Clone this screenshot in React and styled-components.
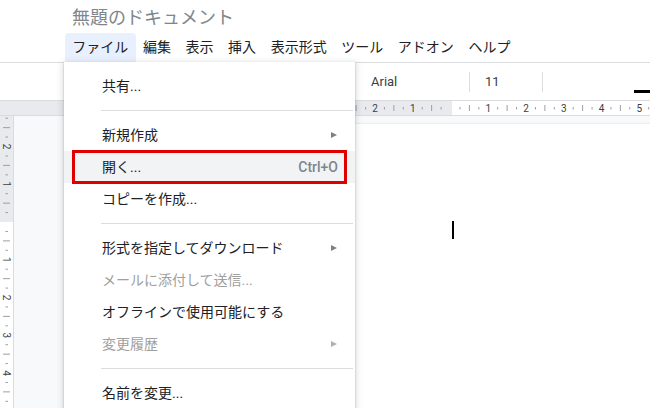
import React from 'react';
import styled, { createGlobalStyle } from 'styled-components';

const GlobalStyle = createGlobalStyle`
  html, body { margin: 0; padding: 0; background: #fff; }
  body {
    font-family: Roboto, "Noto Sans CJK JP", sans-serif;
    overflow: hidden;
  }
`;

const Screen = styled.div`
  position: relative;
  width: 650px;
  height: 408px;
  overflow: hidden;
  display: flex;
  flex-direction: column;
  color: #202124;
  font-family: Roboto, "Noto Sans CJK JP", sans-serif;
`;

const TitleRow = styled.div`
  height: 33px;
  box-sizing: border-box;
  padding: 2px 0 0 72px;
  display: flex;
  align-items: center;
  font-size: 18px;
  line-height: 1;
  color: #80868b;
`;

const MenuBar = styled.div`
  height: 29px;
  display: flex;
  padding-left: 65px;
  border-bottom: 1px solid #dadce0;
`;

const MenuBarItem = styled.div`
  padding: 0 7.3px;
  line-height: 29px;
  font-size: 14px;
  color: #202124;
  border-radius: 4px 4px 0 0;
  background: ${(p) => (p.$active ? '#e8f0fe' : 'transparent')};
`;

const Toolbar = styled.div`
  height: 37px;
  display: flex;
  align-items: center;
  padding-left: 371px;
  border-bottom: 1px solid #dadce0;
  font-size: 13px;
  color: #3c4043;
`;

const ToolText = styled.div`
  width: ${(p) => p.$w}px;
  padding-left: ${(p) => p.$pl || 0}px;
  box-sizing: border-box;
`;

const ToolDivider = styled.div`
  width: 1px;
  height: 20px;
  background: #dadce0;
`;

const ColorBar = styled.div`
  margin-left: auto;
  align-self: flex-end;
  margin-bottom: 7px;
  width: 16px;
  height: 3px;
  background: #000;
`;

const RulerRow = styled.div`
  height: 14px;
  border-bottom: 1px solid #dadce0;
  display: flex;
`;

const Body = styled.div`
  flex: 1;
  display: flex;
  min-height: 0;
`;

const VRuler = styled.div`
  width: 13px;
  border-right: 1px solid #dadce0;
  overflow: hidden;
  flex-shrink: 0;
`;

const Workspace = styled.div`
  flex: 1;
  background: #f8f9fa;
  padding: 8px 0 0 186px;
  display: flex;
`;

const DocPage = styled.div`
  flex: 1;
  background: #fff;
  box-shadow: 0 0 2px rgba(60, 64, 67, 0.2);
  display: flex;
  flex-direction: column;
  align-items: flex-start;
`;

const Caret = styled.div`
  margin: 97px 0 0 252px;
  width: 2px;
  height: 18px;
  background: #000;
`;

const Dropdown = styled.div`
  position: absolute;
  left: 64px;
  top: 62px;
  width: 291px;
  padding-top: 8px;
  padding-bottom: 8px;
  background: #fff;
  box-shadow: 0 2px 6px 2px rgba(60, 64, 67, 0.15), 0 1px 2px rgba(60, 64, 67, 0.3);
  z-index: 5;
`;

const Item = styled.div`
  height: 32px;
  display: flex;
  align-items: center;
  padding: 0 17px 0 38px;
  font-size: 14px;
  line-height: 1;
  color: ${(p) => (p.$disabled ? '#a0a0a0' : '#202124')};
  background: ${(p) => (p.$hover ? '#f1f3f4' : 'transparent')};
`;

const ItemLabel = styled.span`
  flex: 1;
  margin-top: -1px;
`;

const Shortcut = styled.span`
  color: #80868b;
  font-size: 14px;
  font-weight: 500;
`;

const Arrow = styled.span`
  width: 0;
  height: 0;
  border-top: 3.5px solid transparent;
  border-bottom: 3.5px solid transparent;
  border-left: 6px solid ${(p) => (p.$disabled ? '#b0b0b0' : '#808080')};
  margin-right: 1px;
`;

const Separator = styled.div`
  margin: 8px 2px 8px 37px;
  border-top: 1px solid #dadce0;
`;

const Highlight = styled.div`
  position: absolute;
  left: 72px;
  top: 150px;
  width: 275px;
  height: 34px;
  box-sizing: border-box;
  border: 3px solid #e00000;
  z-index: 6;
`;

const IN = 37.75;

function HRuler() {
  const Z = 450.5;
  const q4 = IN / 4;
  const els = [];
  for (let q = -10; q <= 22; q++) {
    if (q === 0) continue;
    const x = Z + q * q4;
    if (x < 0 || x > 650) continue;
    if (q % 4 === 0) {
      els.push(
        <text key={q} x={x} y={10.5} textAnchor="middle" fontSize="10" fill="#3c4043" fontFamily="Roboto, sans-serif">
          {Math.abs(q / 4)}
        </text>
      );
    } else if (q % 2 === 0) {
      els.push(<line key={q} x1={x} x2={x} y1={4} y2={10} stroke="#9aa0a6" strokeWidth="1" />);
    } else {
      els.push(<line key={q} x1={x} x2={x} y1={6} y2={8.5} stroke="#9aa0a6" strokeWidth="1" />);
    }
  }
  return (
    <svg width="650" height="14" style={{ display: 'block' }}>
      <rect x="0" y="0" width="452" height="14" fill="#e8eaed" />
      {els}
    </svg>
  );
}

function VRulerSvg() {
  const Z = 106;
  const q4 = IN / 4;
  const els = [];
  for (let q = -12; q <= 20; q++) {
    if (q === 0) continue;
    const y = Z + q * q4;
    if (y < 0 || y > 300) continue;
    if (q % 4 === 0) {
      els.push(
        <text
          key={q}
          x={6.5}
          y={y}
          textAnchor="middle"
          dominantBaseline="central"
          fontSize="10"
          fill="#3c4043"
          fontFamily="Roboto, sans-serif"
          transform={`rotate(90 6.5 ${y})`}
        >
          {Math.abs(q / 4)}
        </text>
      );
    } else if (q % 2 === 0) {
      els.push(<line key={q} y1={y} y2={y} x1={3} x2={10} stroke="#9aa0a6" strokeWidth="1" />);
    } else {
      els.push(<line key={q} y1={y} y2={y} x1={5.5} x2={8} stroke="#9aa0a6" strokeWidth="1" />);
    }
  }
  return (
    <svg width="13" height="300" style={{ display: 'block' }}>
      <rect x="0" y="0" width="13" height={Z} fill="#e8eaed" />
      {els}
    </svg>
  );
}

const menuBarItems = ['ファイル', '編集', '表示', '挿入', '表示形式', 'ツール', 'アドオン', 'ヘルプ'];

const menu = [
  { label: '共有...' },
  { sep: true },
  { label: '新規作成', arrow: true },
  { label: '開く...', shortcut: 'Ctrl+O', hover: true },
  { label: 'コピーを作成...' },
  { sep: true },
  { label: '形式を指定してダウンロード', arrow: true },
  { label: 'メールに添付して送信...', disabled: true },
  { label: 'オフラインで使用可能にする' },
  { label: '変更履歴', arrow: true, disabled: true },
  { sep: true },
  { label: '名前を変更...' },
];

export default function App() {
  return (
    <>
      <GlobalStyle />
      <Screen>
        <TitleRow>無題のドキュメント</TitleRow>
        <MenuBar>
          {menuBarItems.map((m, i) => (
            <MenuBarItem key={m} $active={i === 0}>
              {m}
            </MenuBarItem>
          ))}
        </MenuBar>
        <Toolbar>
          <ToolText $w={98}>Arial</ToolText>
          <ToolDivider />
          <ToolText $w={72} $pl={15}>11</ToolText>
          <ToolDivider />
          <ColorBar />
        </Toolbar>
        <RulerRow>
          <HRuler />
        </RulerRow>
        <Body>
          <VRuler>
            <VRulerSvg />
          </VRuler>
          <Workspace>
            <DocPage>
              <Caret />
            </DocPage>
          </Workspace>
        </Body>

        <Dropdown>
          {menu.map((m, i) =>
            m.sep ? (
              <Separator key={i} />
            ) : (
              <Item key={i} $hover={m.hover} $disabled={m.disabled}>
                <ItemLabel>{m.label}</ItemLabel>
                {m.shortcut && <Shortcut>{m.shortcut}</Shortcut>}
                {m.arrow && <Arrow $disabled={m.disabled} />}
              </Item>
            )
          )}
        </Dropdown>
        <Highlight />
      </Screen>
    </>
  );
}
